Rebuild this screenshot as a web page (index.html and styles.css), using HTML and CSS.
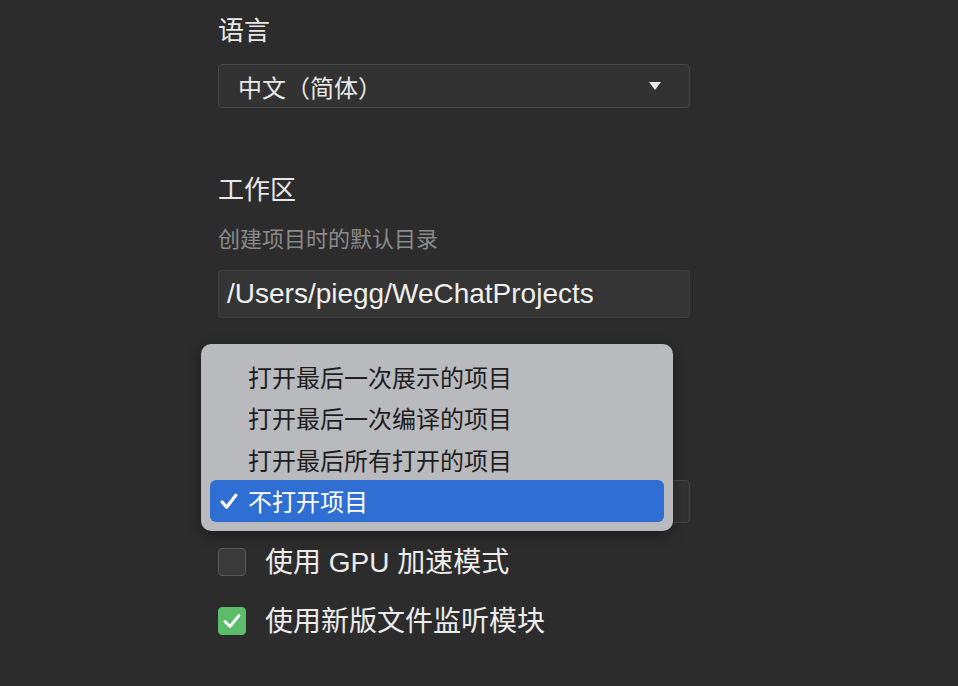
FILE: index.html
```html
<!DOCTYPE html>
<html>
<head>
  <title>设置</title>
  <meta name="viewport" content="width=device-width, initial-scale=1.0">
  <link rel="stylesheet" href="styles.css">
</head>
<body>
  <div class="settings">
    <h2 class="title">语言</h2>
    <div class="select">
      <span>中文（简体）</span>
      <span class="arrow"></span>
    </div>

    <h2 class="title section">工作区</h2>
    <p class="desc">创建项目时的默认目录</p>
    <div class="input">/Users/piegg/WeChatProjects</div>

    <!-- startup select, covered by its open menu -->
    <div class="select-wrap">
      <div class="select select-short">
        <span class="arrow"></span>
      </div>

      <ul class="menu">
        <li class="item">打开最后一次展示的项目</li>
        <li class="item">打开最后一次编译的项目</li>
        <li class="item">打开最后所有打开的项目</li>
        <li class="item active">
          <svg class="tick" width="18" height="17" viewBox="0 0 18 17"><path d="M2.2 9 L6.6 14.3 L15.8 2.2" fill="none" stroke="#fff" stroke-width="3.2" stroke-linecap="round" stroke-linejoin="round"/></svg>
          不打开项目
        </li>
      </ul>
    </div>

    <label class="check-row first">
      <span class="box"></span>
      <span class="label">使用 GPU 加速模式</span>
    </label>
    <label class="check-row">
      <span class="box on">
        <svg width="20" height="18" viewBox="0 0 20 18"><path d="M3 9.5 L8 14.5 L17 3.5" fill="none" stroke="#fff" stroke-width="2.8" stroke-linecap="round" stroke-linejoin="round"/></svg>
      </span>
      <span class="label">使用新版文件监听模块</span>
    </label>
  </div>
</body>
</html>
```

FILE: styles.css
```css
body {
    margin: 0;
    background-color: #2c2c2c;
    font-family: "Liberation Sans", "Noto Sans CJK SC", sans-serif;
    color: #e6e6e6;
}

.settings {
    width: 472px;
    padding: 16px 0 0 218px;
}

.title {
    margin: 0;
    font-size: 26px;
    font-weight: normal;
    line-height: 31px;
    color: #e8e8e8;
}

.section {
    margin-top: 67px;
}

.desc {
    margin: 20px 0 0;
    font-size: 22px;
    line-height: 28px;
    color: #8a8a8a;
}

.select {
    box-sizing: border-box;
    height: 44px;
    margin-top: 17px;
    padding: 0 28px 0 19px;
    display: flex;
    align-items: center;
    justify-content: space-between;
    background-color: #323232;
    border: 1px solid #464646;
    border-radius: 4px;
    font-size: 24px;
    color: #e8e8e8;
}

.select-short {
    height: 43px;
    margin-top: 0;
    justify-content: flex-end;
}

.arrow {
    width: 0;
    height: 0;
    border-left: 6px solid transparent;
    border-right: 6px solid transparent;
    border-top: 8px solid #e8e8e8;
}

.input {
    box-sizing: border-box;
    height: 48px;
    margin-top: 16px;
    padding: 0 8px;
    display: flex;
    align-items: center;
    background-color: #353535;
    border: 1px solid #414141;
    border-radius: 4px;
    font-size: 28px;
    color: #efefef;
}

.select-wrap {
    position: relative;
    margin-top: 162px;
}

.menu {
    position: absolute;
    top: -136px;
    left: -17px;
    box-sizing: border-box;
    width: 472px;
    height: 187px;
    margin: 0;
    padding: 11.5px 9px 10px;
    list-style: none;
    background-color: #b9babe;
    border-radius: 10px;
    box-shadow: 0 4px 14px rgba(0, 0, 0, 0.35);
}

.item {
    position: relative;
    height: 41.5px;
    padding-left: 38px;
    display: flex;
    align-items: center;
    font-size: 24px;
    color: #1e1e1e;
    border-radius: 6px;
}

.item.active {
    background-color: #2f6fd3;
    color: #fff;
}

.tick {
    position: absolute;
    left: 10px;
    top: 13px;
}

.check-row {
    display: flex;
    align-items: center;
    gap: 19px;
    margin-top: 28px;
    font-size: 28px;
    line-height: 28px;
    color: #ececec;
}

.check-row.first {
    margin-top: 23px;
}

.label {
    padding-top: 3px;
}

.box {
    box-sizing: border-box;
    width: 28px;
    height: 28px;
    display: flex;
    align-items: center;
    justify-content: center;
    background-color: #3a3a3a;
    border: 1px solid #585858;
    border-radius: 4px;
}

.box.on {
    background-color: #5bbd6a;
    border-color: #5bbd6a;
}
```
